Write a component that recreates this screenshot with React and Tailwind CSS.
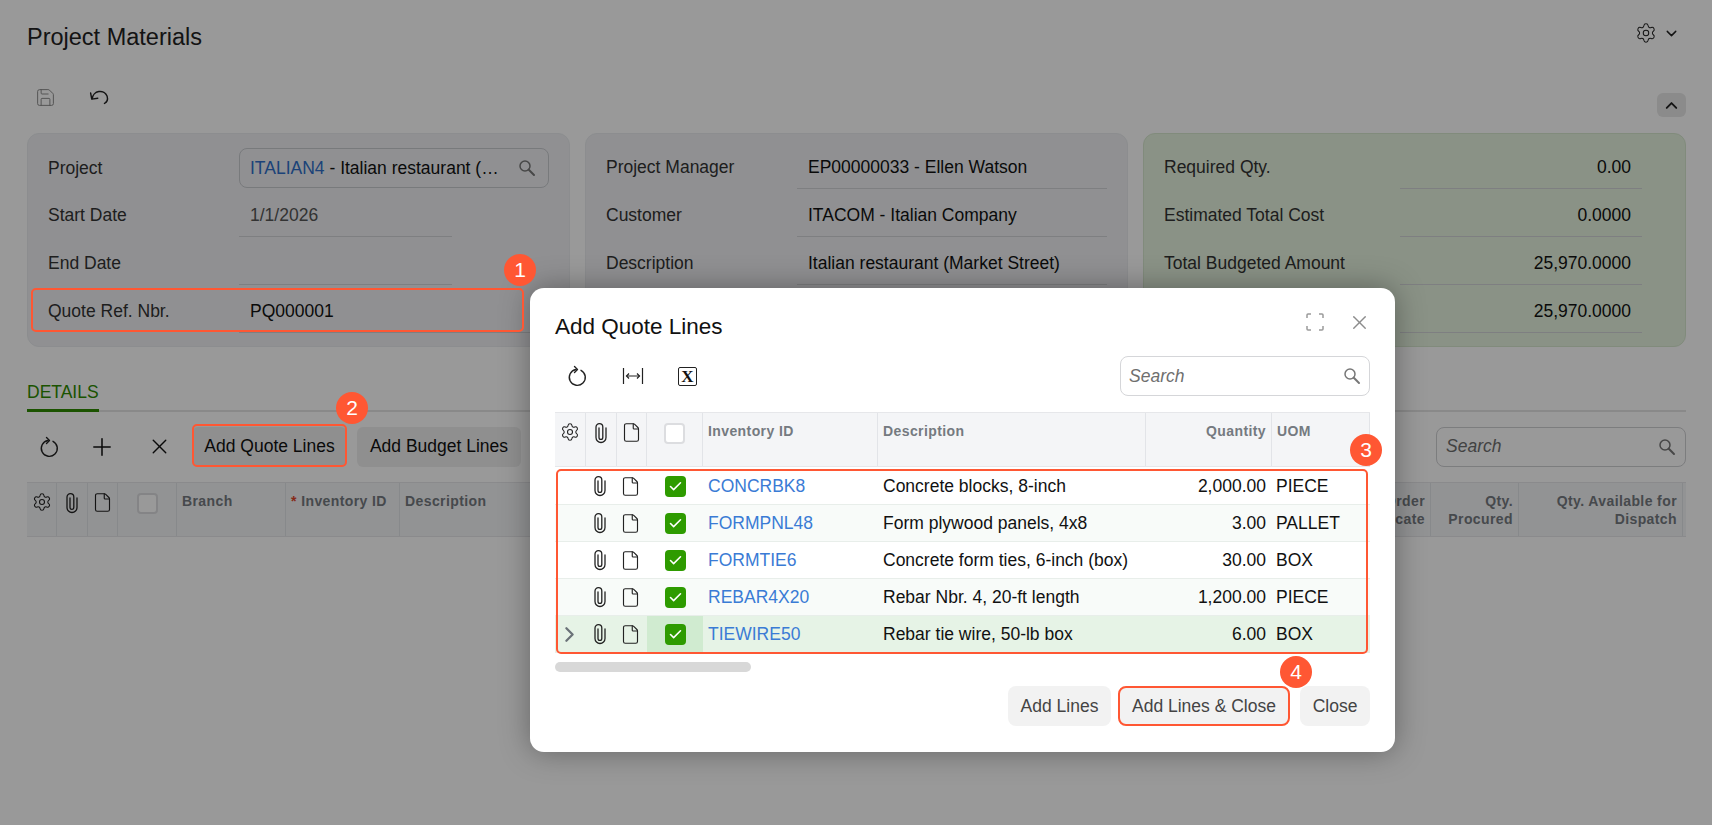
import { Settings, ChevronDown, ChevronUp, ChevronRight, X, Plus, File, Save, Check } from "lucide-react";

const Clip = () => (
  <svg width="16" height="22" viewBox="0 0 16 22" fill="none" stroke="#222" strokeWidth="1.3" strokeLinecap="round">
    <path d="M13 6v9.5a5 5 0 0 1-10 0V5a3.4 3.4 0 0 1 6.8 0v10.5a1.9 1.9 0 0 1-3.8 0V6" />
  </svg>
);

const Refresh = () => (
  <svg width="22" height="22" viewBox="0 0 22 22" fill="none" stroke="#222" strokeWidth="1.4" strokeLinecap="round" strokeLinejoin="round">
    <path d="M15 5.3a8 8 0 1 1-5-.8" />
    <path d="M8.5 1.5l3 3-3 3" />
  </svg>
);

const Undo = () => (
  <svg width="22" height="20" viewBox="0 0 20 18" fill="none" stroke="#222" strokeWidth="1.3" strokeLinecap="round" strokeLinejoin="round">
    <path d="M3 9.5a7 7 0 0 1 13.5-2c.8 2.6-.3 5.2-2.5 6.5" />
    <path d="M1.5 4.5L2.5 10l5.5-.8" />
  </svg>
);

const FitColumns = () => (
  <svg width="22" height="18" viewBox="0 0 22 18" fill="none" stroke="#222" strokeWidth="1.2">
    <path d="M1.5 1v16M20.5 1v16M4.5 9h13" />
    <path d="M7 6.5L4.5 9 7 11.5M15 6.5L17.5 9 15 11.5" />
  </svg>
);

const Expand = () => (
  <svg width="20" height="20" viewBox="0 0 20 20" fill="none" stroke="#9a9a9a" strokeWidth="1.5">
    <path d="M6 2H3a1 1 0 0 0-1 1v3M14 2h3a1 1 0 0 1 1 1v3M6 18H3a1 1 0 0 1-1-1v-3M14 18h3a1 1 0 0 0 1-1v-3" />
  </svg>
);

const Lens = () => (
  <svg width="18" height="18" viewBox="0 0 18 18" fill="none" stroke="#777" className="shrink-0">
    <circle cx="7" cy="7" r="5" strokeWidth="1.5" />
    <path d="M10.8 10.8L16 16" strokeWidth="2" strokeLinecap="round" />
  </svg>
);

const ExcelIcon = () => (
  <span className="flex h-[19px] w-[19px] items-center justify-center rounded-[2px] border border-[#222] font-['Liberation_Serif',serif] text-[17px] font-bold leading-none text-[#111]">
    X
  </span>
);

const Field = ({ label, value, fieldW = "w-[310px]", labelW = "w-[191px]", right, muted }) => (
  <div className="flex h-[48px] items-start pt-[3px]">
    <span className={`${labelW} flex h-[41px] shrink-0 items-center text-[#333]`}>{label}</span>
    <div className={`${fieldW} flex h-[42px] items-center border-b border-[#d2d4d8] ${right ? "justify-end pr-[11px]" : "pl-[11px]"} ${muted ? "text-[#555]" : "text-[#111]"}`}>
      {value}
    </div>
  </div>
);

const Panel = ({ green, children }) => (
  <div className={`flex h-[214px] w-[543px] flex-col rounded-[12px] border px-[20px] pt-[10px] ${green ? "border-[#d7e8cf] bg-[#e6f4df]" : "border-[#e9ebee] bg-[#f0f1f4]"}`}>
    {children}
  </div>
);

const Head = ({ w, children, right, grow }) => (
  <div className={`${grow ? "flex-1" : w} flex shrink-0 border-r border-[#e2e4e8] px-[5px] pt-[9px] text-[14px] font-bold leading-[18px] tracking-[0.4px] text-[#757a80] ${right ? "justify-end text-right" : ""}`}>
    <span>{children}</span>
  </div>
);

const IconHead = ({ w, children }) => (
  <div className={`${w} flex shrink-0 justify-center border-r border-[#e2e4e8] pt-[9px]`}>{children}</div>
);

const Box = () => <span className="mt-[1px] block h-[21px] w-[21px] rounded-[4px] border-2 border-[#dcdde0] bg-white" />;

const lines = [
  { id: "CONCRBK8", desc: "Concrete blocks, 8-inch", qty: "2,000.00", uom: "PIECE" },
  { id: "FORMPNL48", desc: "Form plywood panels, 4x8", qty: "3.00", uom: "PALLET" },
  { id: "FORMTIE6", desc: "Concrete form ties, 6-inch (box)", qty: "30.00", uom: "BOX" },
  { id: "REBAR4X20", desc: "Rebar Nbr. 4, 20-ft length", qty: "1,200.00", uom: "PIECE" },
  { id: "TIEWIRE50", desc: "Rebar tie wire, 50-lb box", qty: "6.00", uom: "BOX", active: true },
];

const Line = ({ line, index }) => {
  const bg = line.active ? "bg-[#e6f3e6]" : index % 2 ? "bg-[#f8fbf9]" : "bg-white";
  return (
    <div className={`flex h-[37px] items-center border-b border-[#e8eeea] ${bg}`}>
      <div className="flex w-[29px] shrink-0 justify-center">
        {line.active && <ChevronRight size={25} strokeWidth={2.2} className="text-[#6b7278]" />}
      </div>
      <div className="flex w-[31px] shrink-0 justify-center"><Clip /></div>
      <div className="flex w-[32px] shrink-0 justify-center pr-[2px]"><File size={21} strokeWidth={1.3} className="text-[#222]" /></div>
      <div className={`flex h-full w-[56px] shrink-0 items-center justify-center ${line.active ? "bg-[#d0ebd0]" : ""}`}>
        <span className="flex h-[21px] w-[21px] items-center justify-center rounded-[4px] bg-[#2e9b00]">
          <Check size={15} strokeWidth={2.5} className="text-white" />
        </span>
      </div>
      <div className="w-[175px] shrink-0 pl-[5px] text-[#3a7bd5]">{line.id}</div>
      <div className="w-[268px] shrink-0 pl-[5px] text-[#111]">{line.desc}</div>
      <div className="w-[126px] shrink-0 pr-[6px] text-right text-[#111]">{line.qty}</div>
      <div className="flex-1 pl-[4px] text-[#111]">{line.uom}</div>
    </div>
  );
};

const Badge = ({ className, children }) => (
  <span className={`absolute flex h-[32px] w-[32px] items-center justify-center rounded-full bg-[#ff5733] text-[21px] text-white ${className}`}>
    {children}
  </span>
);

const Mark = ({ className }) => <div className={`absolute rounded-[5px] border-2 border-[#ff5733] ${className}`} />;

const AddQuoteLines = () => (
  <div className="absolute left-[530px] top-[288px] z-20 flex h-[464px] w-[865px] flex-col rounded-[14px] bg-white px-[25px] shadow-[0_0_30px_rgba(0,0,0,0.35)]">
    <div className="flex h-[68px] shrink-0 items-center justify-between pt-[10px]">
      <h2 className="text-[22.5px] text-[#111]">Add Quote Lines</h2>
      <div className="-mr-[1px] mb-[10px] flex items-center gap-[23px]">
        <Expand />
        <X size={23} strokeWidth={1.4} className="text-[#8c8c8c]" />
      </div>
    </div>
    <div className="flex h-[56px] shrink-0 items-start justify-between">
      <div className="flex h-[40px] items-center gap-[34px] pl-[11px]">
        <Refresh />
        <FitColumns />
        <ExcelIcon />
      </div>
      <div className="flex h-[40px] w-[250px] items-center justify-between rounded-[8px] border border-[#d5d6d9] pl-[8px] pr-[8px]">
        <span className="italic text-[#6f6f6f]">Search</span>
        <Lens />
      </div>
    </div>
    <div className="flex h-[55px] shrink-0 border-y border-[#e6e7ea] bg-[#f4f5f7]">
      <IconHead w="w-[31px]"><Settings size={20} strokeWidth={1.3} className="text-[#222]" /></IconHead>
      <IconHead w="w-[31px]"><Clip /></IconHead>
      <IconHead w="w-[30px]"><File size={21} strokeWidth={1.3} className="text-[#222]" /></IconHead>
      <IconHead w="w-[56px]"><Box /></IconHead>
      <Head w="w-[175px]">Inventory ID</Head>
      <Head w="w-[268px]">Description</Head>
      <Head w="w-[126px]" right>Quantity</Head>
      <Head grow>UOM</Head>
    </div>
    <div className="pt-[1px]">
      {lines.map((line, i) => <Line key={line.id} line={line} index={i} />)}
    </div>
    <div className="mt-[9px] h-[10px] w-[196px] shrink-0 rounded-full bg-[#d8d8d8]" />
    <div className="mt-[14px] flex justify-end gap-[7px] text-[#444]">
      <button className="h-[40px] w-[103px] rounded-[8px] bg-[#f2f2f2]">Add Lines</button>
      <button className="h-[40px] w-[172px] rounded-[8px] border-2 border-[#ff5733] bg-[#f2f2f2]">Add Lines &amp; Close</button>
      <button className="ml-[3px] h-[40px] w-[70px] rounded-[8px] bg-[#f2f2f2]">Close</button>
    </div>
  </div>
);

export default function App() {
  return (
    <div className="relative h-[825px] w-full overflow-hidden bg-white font-['Liberation_Sans',Arial,sans-serif] text-[17.5px]">
      <div className="flex h-full flex-col pl-[27px] pr-[26px]">
        <div className="flex h-[72px] shrink-0 items-center justify-between">
          <h1 className="pt-[4px] text-[23.5px] text-[#222]">Project Materials</h1>
          <div className="mb-[6px] flex items-center gap-[6px] pr-[6px]">
            <Settings size={22} strokeWidth={1.1} className="text-[#222]" />
            <ChevronDown size={17} strokeWidth={2} className="text-[#222]" />
          </div>
        </div>
        <div className="flex h-[61px] shrink-0 items-start justify-between pt-[15px]">
          <div className="flex items-center gap-[33px] pl-[8px]">
            <Save size={21} strokeWidth={1.1} className="text-[#888]" />
            <Undo />
          </div>
          <span className="mt-[6px] flex h-[24px] w-[29px] items-center justify-center rounded-[6px] bg-[#e8e8e8]">
            <ChevronUp size={19} strokeWidth={2.4} className="text-[#222]" />
          </span>
        </div>
        <div className="flex shrink-0 gap-[15px]">
          <Panel>
            <div className="flex h-[48px] items-center">
              <span className="w-[191px] shrink-0 text-[#333]">Project</span>
              <div className="flex h-[40px] w-[310px] items-center justify-between rounded-[8px] border border-[#c9cbcf] pl-[10px] pr-[12px]">
                <span className="truncate text-[#111]"><span className="text-[#2f6fc9]">ITALIAN4</span> - Italian restaurant (…</span>
                <Lens />
              </div>
            </div>
            <Field label="Start Date" value="1/1/2026" fieldW="w-[213px]" muted />
            <Field label="End Date" fieldW="w-[213px]" />
            <Field label="Quote Ref. Nbr." value="PQ000001" />
          </Panel>
          <Panel>
            <Field label="Project Manager" value="EP00000033 - Ellen Watson" />
            <Field label="Customer" value="ITACOM - Italian Company" />
            <Field label="Description" value="Italian restaurant (Market Street)" />
          </Panel>
          <Panel green>
            <Field label="Required Qty." value="0.00" labelW="w-[236px]" fieldW="w-[242px]" right />
            <Field label="Estimated Total Cost" value="0.0000" labelW="w-[236px]" fieldW="w-[242px]" right />
            <Field label="Total Budgeted Amount" value="25,970.0000" labelW="w-[236px]" fieldW="w-[242px]" right />
            <Field label="" value="25,970.0000" labelW="w-[236px]" fieldW="w-[242px]" right />
          </Panel>
        </div>
        <div className="mt-[29px] flex h-[36px] shrink-0 border-b-2 border-[#e4e4e4]">
          <span className="h-[36px] border-b-[3px] border-[#2e8b00] pt-[3px] text-[#2e8b00]">DETAILS</span>
        </div>
        <div className="flex h-[70px] shrink-0 items-center justify-between pb-[1px]">
          <div className="flex items-center">
            <span className="flex w-[44px] justify-center"><Refresh /></span>
            <span className="flex w-[62px] justify-center"><Plus size={28} strokeWidth={1.3} className="text-[#111]" /></span>
            <span className="flex w-[52px] justify-center"><X size={25} strokeWidth={1.3} className="text-[#111]" /></span>
            <button className="ml-[7px] h-[40px] w-[155px] rounded-[6px] bg-[#efefef] text-[#111]">Add Quote Lines</button>
            <button className="ml-[10px] h-[40px] w-[164px] rounded-[6px] bg-[#efefef] text-[#111]">Add Budget Lines</button>
          </div>
          <div className="flex h-[40px] w-[250px] items-center justify-between rounded-[8px] border border-[#cfd0d3] px-[9px]">
            <span className="italic text-[#6f6f6f]">Search</span>
            <Lens />
          </div>
        </div>
        <div className="flex h-[55px] shrink-0 border-y border-[#e6e7ea] bg-[#f4f5f7] pr-[3px]">
          <IconHead w="w-[30px]"><Settings size={20} strokeWidth={1.3} className="text-[#222]" /></IconHead>
          <IconHead w="w-[31px]"><Clip /></IconHead>
          <IconHead w="w-[30px]"><File size={21} strokeWidth={1.3} className="text-[#222]" /></IconHead>
          <IconHead w="w-[59px]"><Box /></IconHead>
          <Head w="w-[109px]">Branch</Head>
          <Head w="w-[114px]"><span className="text-[#e0452a]">* </span>Inventory ID</Head>
          <Head grow>Description</Head>
          <Head w="w-[90px]" right>Order Duplicate</Head>
          <Head w="w-[88px]" right>Qty. Procured</Head>
          <Head w="w-[164px]" right>Qty. Available for Dispatch</Head>
        </div>
      </div>

      <div className="absolute inset-0 z-10 bg-black/40" />
      <AddQuoteLines />

      <div className="pointer-events-none absolute inset-0 z-30">
        <Mark className="left-[31px] top-[288px] h-[44px] w-[493px]" />
        <Mark className="left-[192px] top-[424px] h-[43px] w-[155px]" />
        <Mark className="left-[556px] top-[469px] h-[185px] w-[812px]" />
        <Badge className="left-[504px] top-[254px]">1</Badge>
        <Badge className="left-[336px] top-[392px]">2</Badge>
        <Badge className="left-[1350px] top-[434px]">3</Badge>
        <Badge className="left-[1280px] top-[656px]">4</Badge>
      </div>
    </div>
  );
}
